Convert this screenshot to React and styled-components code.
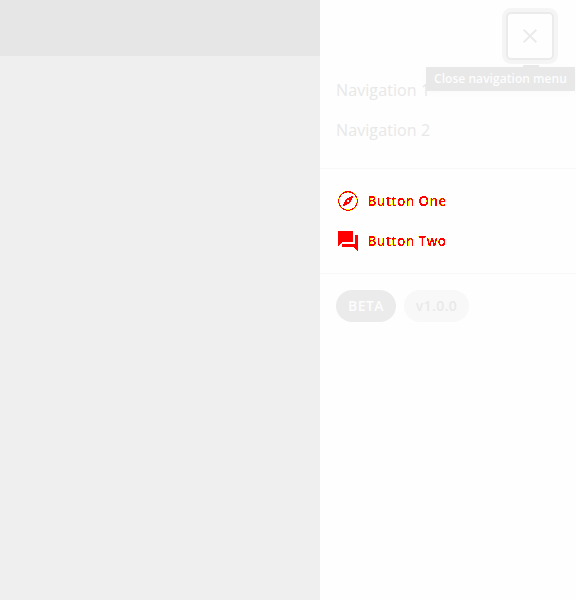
import React from "react";
import styled, { createGlobalStyle } from "styled-components";

const GlobalStyle = createGlobalStyle`
  * { box-sizing: border-box; }
  body { margin: 0; background: #eee; font-family: "Open Sans", "Noto Sans", sans-serif; }
  button { font: inherit; border: 0; background: none; padding: 0; }
`;

const Page = styled.div`
  display: flex;
  width: 576px;
  height: 600px;
  overflow: hidden;
  background: #efefef;
`;

const Content = styled.main`
  flex: 1;
`;

const TopBar = styled.header`
  height: 56px;
  background: #e6e6e6;
`;

const Drawer = styled.aside`
  width: 256px;
  background: #fefefe;
`;

const DrawerHeader = styled.div`
  position: relative;
  display: flex;
  justify-content: flex-end;
  height: 70px;
  padding: 12px 22px 0 0;
`;

const CloseButton = styled.button`
  display: flex;
  align-items: center;
  justify-content: center;
  width: 48px;
  height: 48px;
  border: 2px solid #ebebeb;
  border-radius: 5px;
  background: #fefefe;
  color: #ebebeb;
  box-shadow: 0 0 0 4px #f5f5f5;
`;

const Tooltip = styled.div`
  position: absolute;
  z-index: 1;
  top: 67px;
  right: 1px;
  width: 149px;
  height: 24px;
  padding-left: 8px;
  background: #e8e8e8;
  color: #fdfdfd;
  font-size: 12px;
  font-weight: 600;
  letter-spacing: 0.05px;
  line-height: 24px;
  white-space: nowrap;
  box-shadow: 0 2px 8px rgba(0, 0, 0, 0.02);

  &::before {
    content: "";
    position: absolute;
    top: -2px;
    left: 97px;
    width: 16px;
    height: 2px;
    background: #e8e8e8;
  }
`;

const Section = styled.section`
  padding: ${(p) => p.$pad};
  border-bottom: 1px solid #f7f7f7;
`;

const NavLink = styled.div`
  height: 40px;
  padding-left: 16px;
  color: #e8e8e8;
  font-size: 16px;
  letter-spacing: 0.1px;
  line-height: 40px;
`;

const ActionButton = styled.button`
  display: flex;
  align-items: center;
  gap: 8px;
  width: 100%;
  height: 40px;
  padding-left: 16px;
  color: #f00;
  font-size: 13.5px;
  font-weight: 600;
  filter: url(#contrast-edge);
`;

const ActionLabel = styled.span`
  margin-left: -0.5px;
  padding-bottom: 1px;
  letter-spacing: 0.35px;
`;

const Chips = styled.div`
  display: flex;
  gap: 8px;
  padding: 16px;
`;

const Chip = styled.span`
  width: ${(p) => p.$width};
  height: 32px;
  border-radius: 16px;
  background: ${(p) => (p.$solid ? "#ebebeb" : "#f8f8f8")};
  color: ${(p) => (p.$solid ? "#fdfdfd" : "#e9e9e9")};
  font-size: 14px;
  font-weight: 600;
  letter-spacing: 0.4px;
  line-height: 32px;
  text-align: center;
`;

const FilterDefs = styled.svg`
  display: none;
`;

const EdgeFilter = () => (
  <FilterDefs>
    <filter id="contrast-edge" colorInterpolationFilters="sRGB" x="0" y="0" width="100%" height="100%">
      <feColorMatrix values="0 0 0 0 1  0 0 0 1 0  0 0 0 0 0  0 0 0 1 0" />
      <feComponentTransfer>
        <feFuncG type="discrete" tableValues="1 1 1 1 1 0 0 0 0 0" />
        <feFuncA type="discrete" tableValues="0 0 0 1 1 1 1 1 1 1" />
      </feComponentTransfer>
    </filter>
  </FilterDefs>
);

const CloseIcon = () => (
  <svg width="24" height="24" viewBox="0 0 24 24" fill="none" stroke="currentColor" strokeWidth="2">
    <path d="M5.7 5.7 18.3 18.3M18.3 5.7 5.7 18.3" />
  </svg>
);

const CompassIcon = () => (
  <svg width="24" height="24" viewBox="0 0 24 24" fill="none" stroke="currentColor">
    <circle cx="12" cy="12" r="9.4" strokeWidth="1.1" />
    <path
      fill="currentColor"
      stroke="none"
      fillRule="evenodd"
      d="M17.5 6.5 14 14 6.5 17.5 10 10ZM12 10.6a1.4 1.4 0 1 0 0 2.8 1.4 1.4 0 0 0 0-2.8Z"
    />
  </svg>
);

const ForumIcon = () => (
  <svg width="24" height="24" viewBox="0 0 24 24" fill="currentColor">
    <path d="M21 6h-2v9H6v2c0 .55.45 1 1 1h11l4 4V7c0-.55-.45-1-1-1zm-4 6V3c0-.55-.45-1-1-1H3c-.55 0-1 .45-1 1v14l4-4h10c.55 0 1-.45 1-1z" />
  </svg>
);

export default function App() {
  return (
    <Page>
      <GlobalStyle />
      <EdgeFilter />
      <Content>
        <TopBar />
      </Content>
      <Drawer>
        <DrawerHeader>
          <CloseButton aria-label="Close navigation menu">
            <CloseIcon />
          </CloseButton>
          <Tooltip role="tooltip">Close navigation menu</Tooltip>
        </DrawerHeader>
        <Section $pad="0 0 18px">
          <NavLink>Navigation 1</NavLink>
          <NavLink>Navigation 2</NavLink>
        </Section>
        <Section $pad="12px 0">
          <ActionButton>
            <CompassIcon />
            <ActionLabel>Button One</ActionLabel>
          </ActionButton>
          <ActionButton>
            <ForumIcon />
            <ActionLabel>Button Two</ActionLabel>
          </ActionButton>
        </Section>
        <Chips>
          <Chip $solid $width="60px">BETA</Chip>
          <Chip $width="65px">v1.0.0</Chip>
        </Chips>
      </Drawer>
    </Page>
  );
}
